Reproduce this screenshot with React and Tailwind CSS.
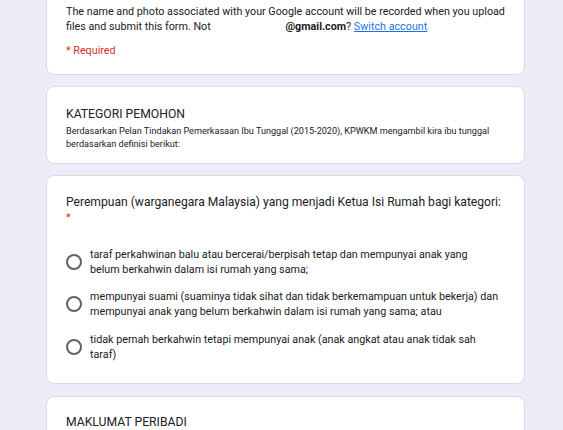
export default function App() {
  return (
    <main className="min-h-[430px] bg-[#f0ebf8] pb-10 font-['Roboto',sans-serif] text-[#202124]">
      <div className="ml-[46px] flex w-[479px] flex-col gap-[11px]">
        {/* account notice (top is scrolled away) */}
        <section className="-mt-3 rounded-lg border border-[#dadce0] bg-white px-[19px] pb-[16.5px] pt-[14.5px]">
          <p className="whitespace-nowrap text-[10.75px] leading-[15px]">
            The name and photo associated with your Google account will be recorded when you upload
            <br />
            files and submit this form. Not{" "}
            <span className="inline-block w-[72px]" />
            <span className="font-bold">@gmail.com</span>?{" "}
            <a href="#" className="text-[#1a73e8] underline">
              Switch account
            </a>
          </p>
          <p className="mt-[9px] text-[10.75px] leading-[15px] text-[#d93025]">* Required</p>
        </section>

        <section className="rounded-lg border border-[#dadce0] bg-white px-[19px] pb-[13px] pt-[19px]">
          <h2 className="text-[12.2px] leading-[16px]">KATEGORI PEMOHON</h2>
          <p className="mt-[3px] whitespace-nowrap text-[9.1px] leading-[12.5px]">
            Berdasarkan Pelan Tindakan Pemerkasaan Ibu Tunggal (2015-2020), KPWKM mengambil kira ibu tunggal
            <br />
            berdasarkan definisi berikut:
          </p>
        </section>

        <section className="rounded-lg border border-[#dadce0] bg-white px-[19px] pb-[21.5px] pt-[18.5px]">
          <h3 className="whitespace-nowrap text-[12.1px] leading-[15px]">
            Perempuan (warganegara Malaysia) yang menjadi Ketua Isi Rumah bagi kategori:
          </h3>
          <div className="text-[11px] leading-[15px] text-[#d93025]">*</div>

          <div className="mt-[22px] flex flex-col gap-[12.5px]">
            {[
              ["taraf perkahwinan balu atau bercerai/berpisah tetap dan mempunyai anak yang", "belum berkahwin dalam isi rumah yang sama;"],
              ["mempunyai suami (suaminya tidak sihat dan tidak berkemampuan untuk bekerja) dan", "mempunyai anak yang belum berkahwin dalam isi rumah yang sama; atau"],
              ["tidak pernah berkahwin tetapi mempunyai anak (anak angkat atau anak tidak sah", "taraf)"],
            ].map(([a, b]) => (
              <label key={a} className="flex items-center gap-2">
                <span className="h-4 w-4 shrink-0 rounded-full border-2 border-[#5f6368]" />
                <span className="whitespace-nowrap text-[10.75px] leading-[15px]">
                  {a}
                  <br />
                  {b}
                </span>
              </label>
            ))}
          </div>
        </section>

        <section className="mt-[0.5px] rounded-lg border border-[#dadce0] bg-white px-[19px] pb-6 pt-[17px]">
          <h2 className="text-[12.2px] leading-[16px]">MAKLUMAT PERIBADI</h2>
        </section>
      </div>
    </main>
  )
}
